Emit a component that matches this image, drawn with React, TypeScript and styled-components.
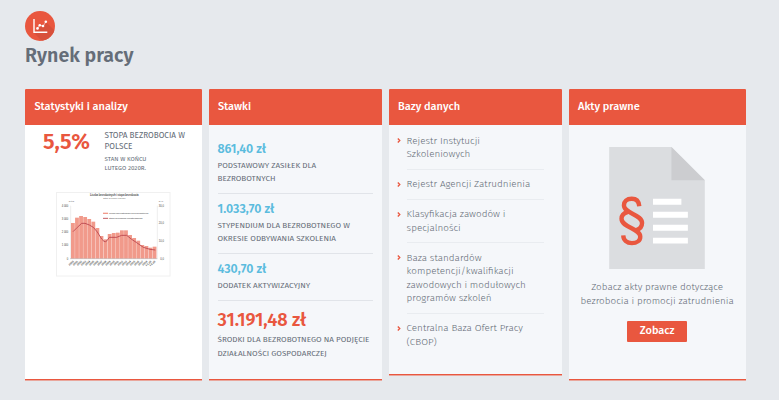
import React from "react";
import styled, { createGlobalStyle } from "styled-components";

const RED = "#e9573f";
const BLUE = "#5bbcde";

const GlobalStyle = createGlobalStyle`
  * { box-sizing: border-box; }
  body {
    margin: 0;
    background: #e6e9ed;
    color: #656d78;
    font-family: "Fira Sans", "Noto Sans", sans-serif;
  }
  h1, h2, p, ul { margin: 0; padding: 0; }
`;

const Page = styled.main`
  width: 779px;
  height: 400px;
  padding: 11px 33px 0 25px;
  overflow: hidden;
`;

const PageHeader = styled.header`
  display: flex;
  flex-direction: column;
  height: 78px;
`;

const TitleIcon = styled.svg`
  width: 30px;
  height: 30px;
`;

const Title = styled.h1`
  margin-top: 2.5px;
  font-size: 19.6px;
  font-weight: 600;
  line-height: 24px;
`;

const Columns = styled.div`
  display: grid;
  grid-template-columns: 177px 173.6px 173.6px 177px;
  column-gap: 6.5px;
  align-items: start;
`;

const Card = styled.section<{ $height: number; $white?: boolean }>`
  display: flex;
  flex-direction: column;
  height: ${(p) => p.$height}px;
  border-radius: 1px 1px 0 0;
  border-bottom: 1px solid ${RED};
  box-shadow: 0 1px 0 #e9a79d;
  background: ${(p) => (p.$white ? "#fff" : "#f5f7fa")};
`;

const CardHeader = styled.h2`
  height: 36px;
  padding-left: 9.4px;
  border-radius: 1px 1px 0 0;
  background: ${RED};
  color: #fff;
  font-size: 11px;
  font-weight: 500;
  line-height: 35px;
`;

const RateSummary = styled.div`
  display: flex;
  padding: 5px 0 0 18px;
`;

const RateValue = styled.p`
  width: 61.6px;
  margin-top: -1px;
  color: ${RED};
  font-size: 22px;
  font-weight: 600;
  line-height: 25px;
`;

const RateName = styled.p`
  font-size: 8.2px;
  line-height: 11.2px;
`;

const RateNote = styled.p`
  margin-top: 2.6px;
  font-size: 6.2px;
  line-height: 8.8px;
`;

const Chart = styled.svg`
  width: 114.5px;
  height: 84.5px;
  margin: 19.8px 0 0 31px;
  font-family: "Liberation Sans", sans-serif;
`;

const Rates = styled.div`
  padding: 9px 9px 0;
`;

const Rate = styled.div`
  padding: 8px 0 7.4px;
  &:not(:last-child) { border-bottom: 1px solid #e1e4e9; }
`;

const Amount = styled.p<{ $large?: boolean }>`
  margin-top: ${(p) => (p.$large ? 1 : 0)}px;
  margin-bottom: ${(p) => (p.$large ? 1.8 : 2)}px;
  color: ${(p) => (p.$large ? RED : BLUE)};
  font-size: ${(p) => (p.$large ? 18.1 : 12.4)}px;
  font-weight: 600;
  line-height: 1.2;
`;

const RateLabel = styled.p`
  font-size: 8.1px;
  line-height: 13.4px;
  white-space: nowrap;
`;

const Links = styled.ul`
  width: 155px;
  padding: 1.4px 0 0 18px;
  list-style: none;
`;

const LinkItem = styled.li`
  position: relative;
  padding: 8.4px 0 7.3px;
  font-size: 9.88px;
  font-weight: 300;
  line-height: 13.4px;
  white-space: nowrap;
  &:not(:last-child) { border-bottom: 1px solid #e9ecf0; }
`;

const Chevron = styled.svg`
  position: absolute;
  left: -9.5px;
  top: 12px;
  width: 4px;
  height: 5px;
`;

const Legal = styled.div`
  display: flex;
  flex-direction: column;
  align-items: center;
  padding-top: 21.5px;
`;

const DocumentIcon = styled.svg`
  width: 96px;
  height: 122.5px;
`;

const LegalText = styled.p`
  margin-top: 12.3px;
  font-size: 9.88px;
  font-weight: 300;
  line-height: 13.4px;
  text-align: center;
  white-space: nowrap;
`;

const Button = styled.button`
  width: 60px;
  height: 21px;
  margin-top: 12.8px;
  padding: 0;
  border: 0;
  border-radius: 1px;
  background: ${RED};
  color: #fff;
  font: 500 11px/20px "Fira Sans", "Noto Sans", sans-serif;
`;

const rates = [
  { amount: "861,40 zł", lines: ["PODSTAWOWY ZASIŁEK DLA", "BEZROBOTNYCH"] },
  { amount: "1.033,70 zł", lines: ["STYPENDIUM DLA BEZROBOTNEGO W", "OKRESIE ODBYWANIA SZKOLENIA"] },
  { amount: "430,70 zł", lines: ["DODATEK AKTYWIZACYJNY"] },
  {
    amount: "31.191,48 zł",
    large: true,
    lines: ["ŚRODKI DLA BEZROBOTNEGO NA PODJĘCIE", "DZIAŁALNOŚCI GOSPODARCZEJ"],
  },
];

const databases = [
  ["Rejestr Instytucji", "Szkoleniowych"],
  ["Rejestr Agencji Zatrudnienia"],
  ["Klasyfikacja zawodów i", "specjalności"],
  ["Baza standardów", "kompetencji/kwalifikacji", "zawodowych i modułowych", "programów szkoleń"],
  ["Centralna Baza Ofert Pracy", "(CBOP)"],
];

const barTops = [114, 98, 93, 96, 102, 110, 129, 153, 163, 147, 144, 143, 136, 136, 150, 159, 167, 180, 183, 188, 185];

const Lines = ({ lines }: { lines: string[] }) => (
  <>
    {lines.map((line, i) => (
      <React.Fragment key={line}>
        {i > 0 && <br />}
        {line}
      </React.Fragment>
    ))}
  </>
);

const UnemploymentChart = () => (
  <Chart viewBox="18 21 343.5 253.5">
    <rect x="19.5" y="22.5" width="340.5" height="250.5" fill="#fff" stroke="#f0f0f0" strokeWidth="3" />
    <g fill="#555" textAnchor="middle">
      <text x="193" y="34" fontSize="8.500" fontWeight="700" textLength="146">Liczba bezrobotnych i stopa bezrobocia</text>
      <text x="193" y="43" fontSize="6.5" textLength="66">Stan w końcu okresu</text>
      <text x="65" y="51" fontSize="7">w tys.</text>
      <text x="333" y="50" fontSize="7">w %</text>
    </g>
    <path d="M62 62V221M322 62V221" stroke="#ddd" strokeWidth="1.5" />
    {barTops.map((top, i) => (
      <rect key={i} x={63 + i * 12.25} y={top} width="11.4" height={221 - top} fill="#f19a8b" />
    ))}
    <path d="M60 221H322" stroke="#aaa" strokeWidth="1.5" />
    <path
      d="M69 140L82 127L95 115H105L118 120L130 127L142 141L155 162L162 169Q167 172 171 167L178 157H200L215 151H230L245 163L260 173L280 187L300 193L316 195"
      fill="none" stroke="#b8434d" strokeWidth="2.6"
    />
    <g fontSize="7" fill="#333">
      <path d="M159 85H174" stroke="#f19a8b" strokeWidth="4" />
      <path d="M159 100H174" stroke="#b8434d" strokeWidth="2.6" />
      <text x="177" y="87" textLength="118">liczba zarejestrowanych bezrobotnych</text>
      <text x="177" y="102" textLength="101">stopa bezrobocia rejestrowanego</text>
    </g>
    <g fontSize="8" fill="#444" textAnchor="end">
      {["4 000", "3 000", "2 000", "1 000", "0"].map((label, i) => (
        <text key={label} x="55" y={65 + i * 39.7}>{label}</text>
      ))}
      {["30,0", "20,0", "10,0", "0,0"].map((label, i) => (
        <text key={label} x="342" y={65 + i * 53}>{label}</text>
      ))}
    </g>
    <g fontSize="8" fontWeight="700" fill="#444" textAnchor="end">
      {barTops.map((_, i) => (
        <text key={i} transform={`translate(${72 + i * 12.25} 230) rotate(-42)`}>{i > 18 ? `I-${i - 18}.20` : 2000 + i}</text>
      ))}
    </g>
  </Chart>
);

export default function App() {
  return (
    <Page>
      <GlobalStyle />
      <PageHeader>
        <TitleIcon viewBox="0 0 30 30">
          <defs><clipPath id="disc"><circle cx="15" cy="15" r="15" /></clipPath></defs>
          <circle cx="15" cy="15" r="15" fill={RED} />
          <path d="M8.5 21.5L21 11l12 12v12H22z" fill="#d8503b" clipPath="url(#disc)" />
          <path d="M9 8v13.3H22.3" fill="none" stroke="#fff" strokeWidth="1.4" />
          <path d="M12.5 17.4l2.300-3.200 3.200 1 3-4.500" fill="none" stroke="#fff" strokeWidth="0.6" />
          <g fill="#fff">
            <circle cx="12.500" cy="17.400" r="1.3" />
            <circle cx="14.800" cy="14.200" r="1.3" />
            <circle cx="18" cy="15" r="1.3" />
            <circle cx="20.800" cy="10.800" r="1.3" />
          </g>
        </TitleIcon>
        <Title>Rynek pracy</Title>
      </PageHeader>
      <Columns>
        <Card $height={291} $white>
          <CardHeader>Statystyki i analizy</CardHeader>
          <RateSummary>
            <RateValue>5,5%</RateValue>
            <div>
              <RateName><Lines lines={["STOPA BEZROBOCIA W", "POLSCE"]} /></RateName>
              <RateNote><Lines lines={["STAN W KOŃCU", "LUTEGO 2020R."]} /></RateNote>
            </div>
          </RateSummary>
          <UnemploymentChart />
        </Card>
        <Card $height={291}>
          <CardHeader>Stawki</CardHeader>
          <Rates>
            {rates.map((rate) => (
              <Rate key={rate.amount}>
                <Amount $large={rate.large}>{rate.amount}</Amount>
                <RateLabel><Lines lines={rate.lines} /></RateLabel>
              </Rate>
            ))}
          </Rates>
        </Card>
        <Card $height={285.5}>
          <CardHeader>Bazy danych</CardHeader>
          <Links>
            {databases.map((lines) => (
              <LinkItem key={lines[0]}>
                <Chevron viewBox="0 0 4 5"><path d="M.8.5l2 2-2 2" fill="none" stroke={RED} strokeWidth="1.3" /></Chevron>
                <Lines lines={lines} />
              </LinkItem>
            ))}
          </Links>
        </Card>
        <Card $height={291}>
          <CardHeader>Akty prawne</CardHeader>
          <Legal>
            <DocumentIcon viewBox="0 0 96 123">
              <path d="M0 0h62.5L96 33.5V123H0z" fill="#dbdde0" />
              <path d="M62.5 0L96 33.5H62.5z" fill="#cccdd0" />
              <path d="M44 52h28.5v6H44zM44 65h35v6H44zM44 78h35v6H44zM44 91h35v6H44z" fill="#fff" />
              <path
                d="M30.2 59.5C29.8 54.5 27 52 22.6 52c-5 0-7.800 3-7.800 6.500 0 8.500 18.200 9 18.200 17.800 0 4-2.500 6.300-6.200 7.300M18.300 65.500c-3.600 1-5.900 3.200-5.900 6.600 0 8.700 18.800 9.800 18.800 17.900 0 4-3.500 6.500-8.400 6.500-5 0-8.400-2.700-8.700-7.800"
                fill="none" stroke={RED} strokeWidth="4.400"
              />
            </DocumentIcon>
            <LegalText><Lines lines={["Zobacz akty prawne dotyczące", "bezrobocia i promocji zatrudnienia"]} /></LegalText>
            <Button>Zobacz</Button>
          </Legal>
        </Card>
      </Columns>
    </Page>
  );
}
